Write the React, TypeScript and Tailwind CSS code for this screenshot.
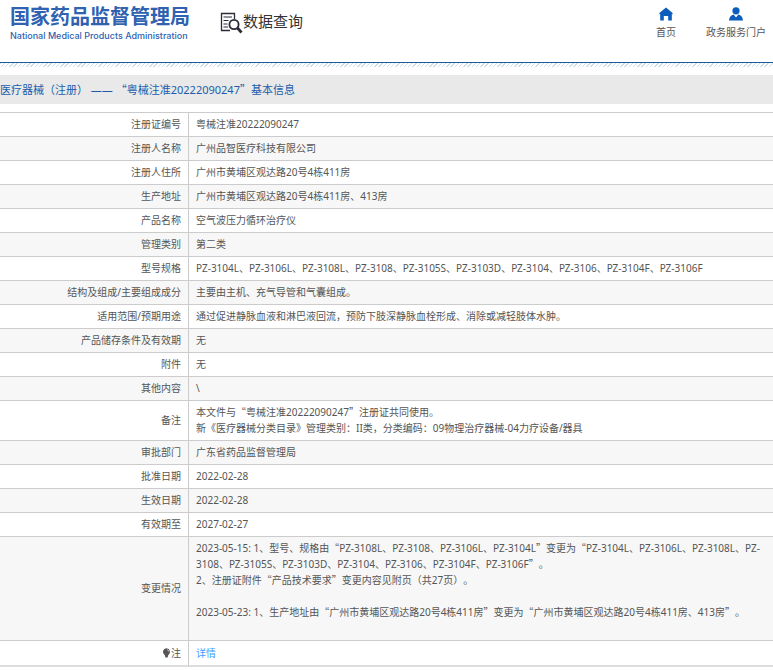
import React from 'react';

type Row = { label: string; lines: string[] };

const rows: Row[] = [
  { label: '注册证编号', lines: ['粤械注准20222090247'] },
  { label: '注册人名称', lines: ['广州品智医疗科技有限公司'] },
  { label: '注册人住所', lines: ['广州市黄埔区观达路20号4栋411房'] },
  { label: '生产地址', lines: ['广州市黄埔区观达路20号4栋411房、413房'] },
  { label: '产品名称', lines: ['空气波压力循环治疗仪'] },
  { label: '管理类别', lines: ['第二类'] },
  {
    label: '型号规格',
    lines: ['PZ-3104L、PZ-3106L、PZ-3108L、PZ-3108、PZ-3105S、PZ-3103D、PZ-3104、PZ-3106、PZ-3104F、PZ-3106F'],
  },
  { label: '结构及组成/主要组成成分', lines: ['主要由主机、充气导管和气囊组成。'] },
  {
    label: '适用范围/预期用途',
    lines: ['通过促进静脉血液和淋巴液回流，预防下肢深静脉血栓形成、消除或减轻肢体水肿。'],
  },
  { label: '产品储存条件及有效期', lines: ['无'] },
  { label: '附件', lines: ['无'] },
  { label: '其他内容', lines: ['\\'] },
  {
    label: '备注',
    lines: [
      '本文件与“粤械注准20222090247”注册证共同使用。',
      '新《医疗器械分类目录》管理类别：II类，分类编码：09物理治疗器械-04力疗设备/器具',
    ],
  },
  { label: '审批部门', lines: ['广东省药品监督管理局'] },
  { label: '批准日期', lines: ['2022-02-28'] },
  { label: '生效日期', lines: ['2022-02-28'] },
  { label: '有效期至', lines: ['2027-02-27'] },
  {
    label: '变更情况',
    lines: [
      '2023-05-15: 1、型号、规格由“PZ-3108L、PZ-3108、PZ-3106L、PZ-3104L”变更为“PZ-3104L、PZ-3106L、PZ-3108L、PZ-3108、PZ-3105S、PZ-3103D、PZ-3104、PZ-3106、PZ-3104F、PZ-3106F”。',
      '2、注册证附件“产品技术要求”变更内容见附页（共27页）。',
      '',
      '2023-05-23: 1、生产地址由“广州市黄埔区观达路20号4栋411房”变更为“广州市黄埔区观达路20号4栋411房、413房”。',
      '',
    ],
  },
];

// Quotation marks take the full-width form of the Chinese font
const Quoted: React.FC<{ text: string }> = ({ text }) => (
  <>
    {text.split(/([“”])/).map((part, i) =>
      part === '“' || part === '”' ? (
        <span key={i} className="font-['Noto_Sans_CJK_SC',sans-serif]">{part}</span>
      ) : (
        part
      )
    )}
  </>
);

const SearchDocIcon: React.FC = () => (
  <svg className="w-[23px] h-[23px]" viewBox="0 -1 23 23" fill="none" stroke="#2b2b3a" aria-hidden="true">
    <path d="M14.5 7V1.5H1.5V18.5H10" strokeWidth="1.3" />
    <path d="M3.5 5H12M3.5 8.5H8.5M3.5 12H7.5M3.5 15H8" strokeWidth="1.2" />
    <circle cx="14" cy="12.5" r="4.6" strokeWidth="1.8" />
    <path d="M17.5 16L21.5 20.5" strokeWidth="2.8" />
  </svg>
);

const HomeIcon: React.FC = () => (
  <svg className="w-[14px] h-[14px]" viewBox="0 0 14 14" fill="#0b5cbc" aria-hidden="true">
    <path d="M7 0.4L13.6 6V7.2H12.8V13.4H9.2V9H4.8V13.4H1.2V7.2H0.4V6Z" />
  </svg>
);

const UserIcon: React.FC = () => (
  <svg className="w-[14px] h-[14px]" viewBox="0 0 14 14" fill="#0b5cbc" aria-hidden="true">
    <circle cx="7" cy="3.8" r="3.6" />
    <path d="M4.6 7.6L7 10.6L9.4 7.6C12 8.2 13.8 10 14 13.6H0C0.2 10 2 8.2 4.6 7.6Z" />
  </svg>
);

const BulbIcon: React.FC = () => (
  <svg className="w-[9px] h-[10px]" viewBox="0 0 9 10" fill="#555" aria-hidden="true">
    <path d="M4.5 0.3A3.7 3.7 0 0 1 6.2 7.2L5.6 9.6H3.4L2.8 7.2A3.7 3.7 0 0 1 4.5 0.3Z" />
    <path d="M5.2 1.8A2 2 0 0 1 6.8 3.6" fill="none" stroke="#ddd" strokeWidth="0.9" />
  </svg>
);

const Header: React.FC = () => (
  <header>
    <div className="flex items-start justify-between h-[62px] pl-[10px] pr-[7px] pt-[5px]">
      <div className="flex items-start gap-[30px]">
        <a href="#" className="block whitespace-nowrap text-[#2f62b0]">
          <span className="block text-[20px] leading-[24px] font-bold">国家药品监督管理局</span>
          <span className="block text-[9px] leading-[14px] font-medium font-['Inter',sans-serif]">
            National Medical Products Administration
          </span>
        </a>
        <h1 className="flex items-start pt-[6px] text-[15px] leading-[20px] text-[#333] whitespace-nowrap">
          <SearchDocIcon />
          数据查询
        </h1>
      </div>
      <nav className="flex gap-[30px] pt-[2px] text-[10px] leading-[16px] whitespace-nowrap">
        <a href="#" className="flex flex-col items-center gap-[3px]">
          <HomeIcon />
          首页
        </a>
        <a href="#" className="flex flex-col items-center gap-[3px]">
          <UserIcon />
          政务服务门户
        </a>
      </nav>
    </div>
    <div className="border-t border-[#1b5c9e] h-[5px] bg-[repeating-linear-gradient(135deg,#cfe0e4_0_1px,#ffffff_1px_3px)]" />
  </header>
);

const App: React.FC = () => {
  return (
    <div
      lang="zh-CN"
      className="min-h-screen bg-white text-[#555] font-['Noto_Sans','Noto_Sans_CJK_SC',sans-serif] [text-spacing-trim:space-all]"
    >
      <Header />
      <main>
        <h2 className="mt-2 bg-[#e9e9e9] text-[11px] leading-[28px] text-[#1b5cab] whitespace-nowrap">
          <Quoted text="医疗器械（注册） —— “粤械注准20222090247”基本信息" />
        </h2>
        <table className="mt-2 w-full table-fixed border-separate border-spacing-0 border-t border-[#ccc] text-[10px] leading-[16px]">
          <tbody>
            {rows.map((row) => (
              <tr key={row.label} className="even:bg-[#f7f7f7]">
                <th
                  scope="row"
                  className="w-[189px] pt-[3px] pb-1 pr-[7px] border-b border-r border-[#ccc] text-right font-normal"
                >
                  {row.label}
                </th>
                <td className="pt-[3px] pb-1 pl-[7px] border-b border-[#ccc]">
                  {row.lines.map((line, i) => (
                    <p key={i} className="min-h-4">
                      <Quoted text={line} />
                    </p>
                  ))}
                </td>
              </tr>
            ))}
            <tr>
              <th scope="row" className="pt-1 pb-1 pr-[7px] border-b-2 border-r border-[#ccc] border-b-[#ddd] font-normal">
                <span className="flex items-center justify-end">
                  <BulbIcon />
                  注
                </span>
              </th>
              <td className="pt-1 pb-1 pl-[7px] border-b-2 border-[#ddd]">
                <a href="#" className="text-[#409eff]">详情</a>
              </td>
            </tr>
          </tbody>
        </table>
      </main>
    </div>
  );
};

export default App;
